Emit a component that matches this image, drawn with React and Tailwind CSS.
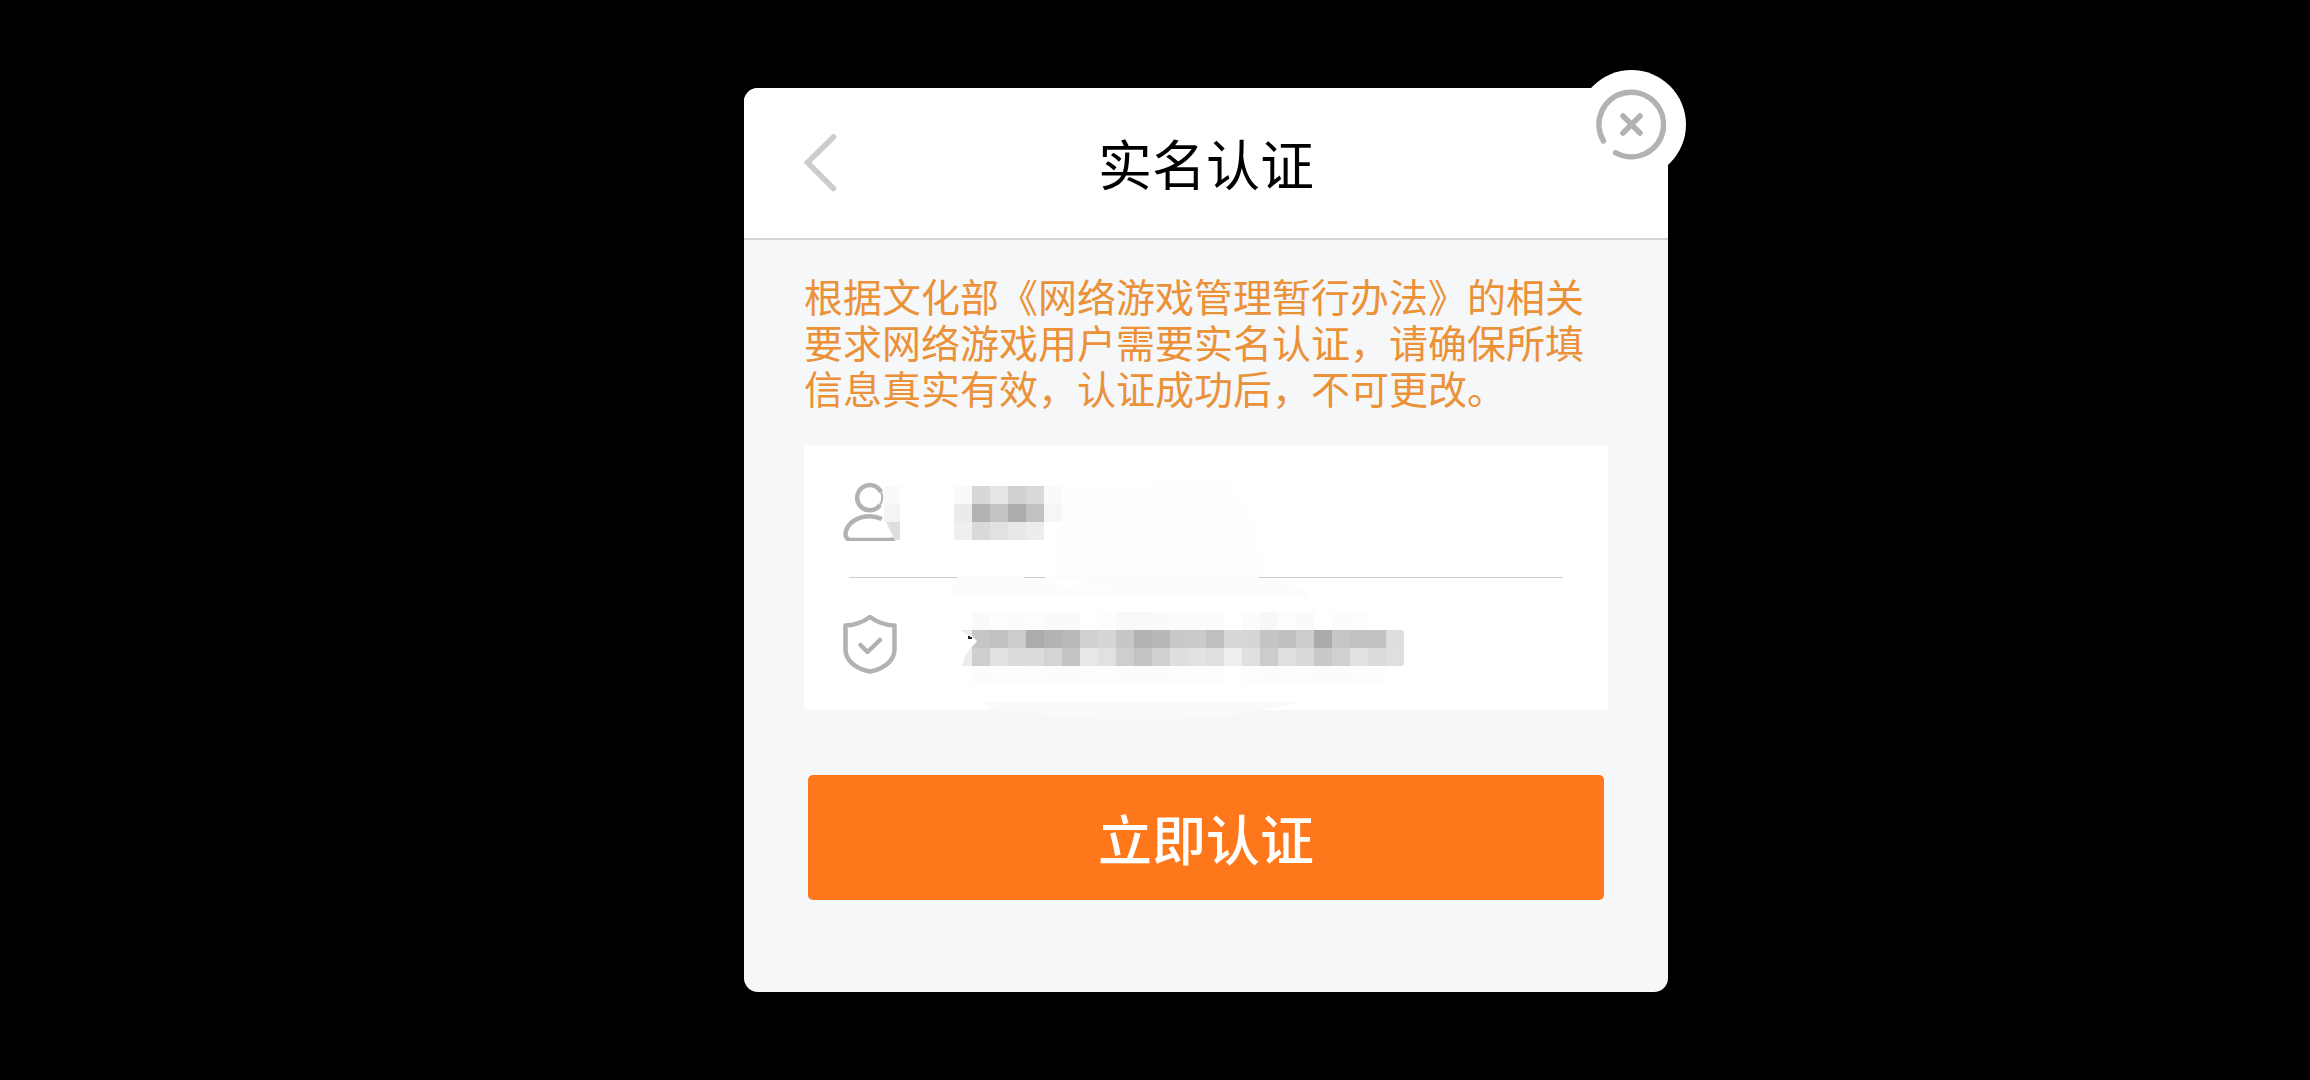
import { useState } from "react";

const CELL = 18;

// grey level of each cell, row by row, null = nothing painted
const nameCells = [
  ["#fafafa", "#d8d8d8", "#e5e5e5", "#d1d1d1", "#d9d9d9", "#fafafa"],
  ["#ebebeb", "#b2b2b2", "#c3c3c3", "#acacac", "#c2c2c2", "#f6f6f6"],
  ["#efefef", "#d9d9d9", "#e1e1e1", "#e8e8e8", "#ededed", null],
];

const idCells = [
  ["#fafafa", "#fdfdfd", "#fbfbfb", "#fdfdfd", "#fafafa", "#fafafa", null, "#fdfdfd", "#f9f9f9", "#f9f9f9", "#fafafa", "#fcfcfc", "#fcfcfc", "#fcfcfc", null, "#fcfcfc", "#f8f8f8", "#fdfdfd", "#fafafa", null, "#fcfcfc", "#fdfdfd", null, null],
  ["#c6c6c6", "#c1c1c1", "#cccccc", "#acacac", "#b3b3b3", "#b9b9b9", "#d0d0d0", "#d6d6d6", "#c6c6c6", "#b2b2b2", "#b8b8b8", "#c9c9c9", "#cacaca", "#bfbfbf", "#d8d8d8", "#d6d6d6", "#c5c5c5", "#c0c0c0", "#cccccc", "#ababab", "#c6c6c6", "#c2c2c2", "#c2c2c2", "#dedede"],
  ["#cfcfcf", "#e2e2e2", "#dbdbdb", "#dcdcdc", "#d4d4d4", "#c3c3c3", "#e8e8e8", "#e1e1e1", "#cecece", "#c3c3c3", "#d0d0d0", "#dedede", "#e2e2e2", "#dfdfdf", "#eeeeee", "#e0e0e0", "#cccccc", "#dfdfdf", "#d9d9d9", "#c9c9c9", "#d0d0d0", "#e1e1e1", "#dbdbdb", "#dfdfdf"],
  ["#fcfcfc", "#fdfdfd", "#fdfdfd", "#fdfdfd", "#fcfcfc", "#fcfcfc", "#fdfdfd", "#fdfdfd", "#fcfcfc", "#fcfcfc", "#fcfcfc", "#fdfdfd", "#fdfdfd", "#fdfdfd", null, "#fdfdfd", "#fcfcfc", "#fdfdfd", "#fdfdfd", "#fcfcfc", "#fcfcfc", "#fdfdfd", "#fdfdfd", null],
];

function Mosaic({ x, y, cells }) {
  return cells.map((row, r) =>
    row.map((fill, c) =>
      fill ? (
        <rect key={`${r}-${c}`} x={x + c * CELL} y={y + r * CELL} width={CELL} height={CELL} fill={fill} shapeRendering="crispEdges" />
      ) : null
    )
  );
}

// hides the personal data on both rows
function PrivacyMask() {
  return (
    <svg className="pointer-events-none absolute left-0 top-0 overflow-visible" width="804" height="265" viewBox="0 0 804 265" aria-hidden="true">
      <path d="M176 257 H496 Q476 263 456 265 C420 272 390 274 350 274 H310 C260 273 230 267 190 265 Z" fill="#f9fafc" />
      <path d="M146 152 Q148 138 156 130 H220 V136 H241 V130 H455 V135 Q495 137 506 152 Z" fill="#fcfcfc" />
      <path d="M241 133 Q280 135 307 143 L305 148 H280 Q262 141 235 136 Z" fill="#fefefe" />
      <path d="M340 40 Q390 30 420 34 Q456 70 459 129 H250 V41 Z" fill="#fefefe" />
      <rect x="80" y="41" width="16" height="18" fill="#fafafa" />
      <rect x="80" y="59" width="16" height="18" fill="#f4f4f4" />
      <path d="M82 77 H96 V95 H91 Z" fill="#dedede" />
      <Mosaic x={150} y={41} cells={nameCells} />
      <path d="M156 185 H168 V193 Z M168 201 V221 H158 Q161 209 168 201 Z" fill="#ececec" />
      <Mosaic x={168} y={167} cells={idCells} />
      <path d="M168 191 L173 196 L168 202 Z" fill="#ffffff" />
      <path d="M164 191 h2 v1 h2 v2 h-4 Z" fill="#222222" />
      <path d="M597 185 h3 v3 q0 -3 -3 -3 Z M597 221 h3 v-3 q0 3 -3 3 Z" fill="#ffffff" />
    </svg>
  );
}

function UserIcon() {
  return (
    <svg width="60" height="60" viewBox="0 0 60 60" fill="none" stroke="#b2b2b2" strokeWidth="4.500" aria-hidden="true">
      <path d="M41 11 A12.600 12.600 0 1 0 40 24" />
      <path d="M41 11 Q43 15 42 20 L40 24" strokeWidth="2" />
      <path d="M42 38 C31 33 19 35 11 42 C6 47 5.500 50 5.500 53 C5.500 57 8 59 11 59 H50 Q53 59 54 57" />
    </svg>
  );
}

function ShieldIcon() {
  return (
    <svg width="60" height="60" viewBox="0 0 60 60" fill="none" stroke="#b2b2b2" strokeWidth="4.500" strokeLinejoin="round" strokeLinecap="round" aria-hidden="true">
      <path d="M30 3 Q41 11 54.500 11.500 V36 C54.500 47 43 55 30 57.500 C17 55 5.500 47 5.500 36 V11.500 Q19 11 30 3 Z" />
      <path d="M20.500 31 L27.500 38 L40 26" />
    </svg>
  );
}

function Field({ icon, label, name }) {
  const [value, setValue] = useState("");

  return (
    <div className="flex h-[132px] items-center gap-12 px-9">
      {icon}
      <input
        type="text"
        name={name}
        aria-label={label}
        value={value}
        onChange={(e) => setValue(e.target.value)}
        className="h-16 min-w-0 flex-1 bg-transparent text-[39px] text-gray-800 outline-none"
      />
    </div>
  );
}

export default function App() {
  return (
    <main className="flex min-h-screen items-center justify-center bg-black pl-[102px] font-['Noto_Sans_CJK_SC',sans-serif]">
      <section className="relative w-full max-w-[924px] rounded-[14px] bg-[#f5f7f9]">
        <header className="grid h-[152px] grid-cols-[60px_1fr_60px] items-center rounded-t-[14px] border-b-2 border-[#d3d3d3] bg-white px-[60px]">
          <button type="button" aria-label="返回">
            <svg width="36" height="60" viewBox="0 0 36 60" fill="none" stroke="#cccccc" strokeWidth="5.500" strokeLinecap="round" aria-hidden="true">
              <path d="M29.500 4 L3.500 29.500 L29.500 55.500" />
            </svg>
          </button>
          <h1 className="text-center text-[54px] leading-[60px] text-black">实名认证</h1>
        </header>

        <button type="button" aria-label="关闭" className="absolute -right-[18px] -top-[18px] rounded-full bg-white">
          <svg width="109" height="109" viewBox="0 0 109 109" fill="none" stroke="#b2b2b2" strokeWidth="5.500" strokeLinecap="round" aria-hidden="true">
            <path d="M26.500 71 A32.300 32.300 0 1 1 38.500 82.700" />
            <path d="M46 46 L63 63 M63 46 L46 63" />
          </svg>
        </button>

        <form className="px-[60px] pb-[92px] pt-8" onSubmit={(e) => e.preventDefault()}>
          <p className="text-[39px] leading-[46px] text-[#eb9138]">
            根据文化部《网络游戏管理暂行办法》的相关要求网络游戏用户需要实名认证，请确保所填信息真实有效，认证成功后，不可更改。
          </p>

          <div className="relative mt-[35px] bg-white">
            <Field icon={<UserIcon />} label="姓名" name="realName" />
            <div className="mx-[45px] h-px bg-[#cccccc]" />
            <Field icon={<ShieldIcon />} label="身份证号" name="idNumber" />
            <PrivacyMask />
          </div>

          <div className="mt-[65px] px-1">
            <button type="submit" className="h-[125px] w-full rounded-[5px] bg-[#ff771b] text-[54px] font-medium leading-[60px] text-white">
              立即认证
            </button>
          </div>
        </form>
      </section>
    </main>
  );
}
